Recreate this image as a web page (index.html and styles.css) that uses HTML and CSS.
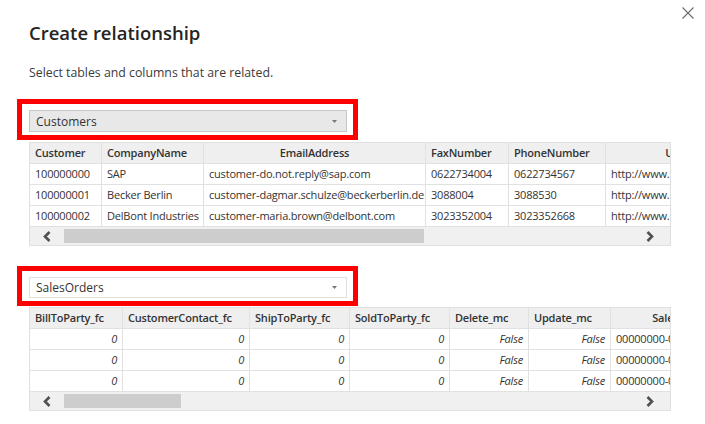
FILE: index.html
```html
<!DOCTYPE html>
<html lang="en">
<head>
<meta charset="utf-8">
<title>Create relationship</title>
<link rel="stylesheet" href="styles.css">
</head>
<body>
<div class="dialog">
  <button class="close" aria-label="Close">
    <svg width="12" height="12" viewBox="0 0 12 12"><path d="M0.5 0.5L11.5 11.5M11.5 0.5L0.5 11.5" stroke="#6b6b6b" stroke-width="1.1" fill="none"/></svg>
  </button>
  <h1 class="title">Create relationship</h1>
  <p class="subtitle">Select tables and columns that are related.</p>

  <section class="picker first">
    <div class="select active highlight">
      <span class="select-label">Customers</span>
      <svg class="caret" width="5" height="3" viewBox="0 0 5 3"><path d="M0 0H5L2.5 3Z" fill="#777"/></svg>
    </div>
    <div class="grid">
      <div class="grid-view cols-a">
        <div class="th">Customer</div>
        <div class="th">CompanyName</div>
        <div class="th center">EmailAddress</div>
        <div class="th">FaxNumber</div>
        <div class="th">PhoneNumber</div>
        <div class="th center">URL</div>

        <div class="td">100000000</div>
        <div class="td">SAP</div>
        <div class="td">customer-do.not.reply@sap.com</div>
        <div class="td">0622734004</div>
        <div class="td">0622734567</div>
        <div class="td">http://www.sap.com</div>

        <div class="td">100000001</div>
        <div class="td">Becker Berlin</div>
        <div class="td">customer-dagmar.schulze@beckerberlin.de</div>
        <div class="td">3088004</div>
        <div class="td">3088530</div>
        <div class="td">http://www.beckerberlin.de</div>

        <div class="td">100000002</div>
        <div class="td">DelBont Industries</div>
        <div class="td">customer-maria.brown@delbont.com</div>
        <div class="td">3023352004</div>
        <div class="td">3023352668</div>
        <div class="td">http://www.delbont.com</div>
      </div>
      <div class="hscroll">
        <span class="arrow-btn left">
          <svg width="10" height="11" viewBox="0 0 10 11"><path d="M7.5 1L3 5.5L7.5 10" stroke="#505050" stroke-width="2.6" fill="none"/></svg>
        </span>
        <div class="track"><div class="thumb" style="width:360px"></div></div>
        <span class="arrow-btn right">
          <svg width="10" height="11" viewBox="0 0 10 11"><path d="M2.5 1L7 5.5L2.5 10" stroke="#505050" stroke-width="2.6" fill="none"/></svg>
        </span>
      </div>
    </div>
  </section>

  <section class="picker second">
    <div class="select highlight">
      <span class="select-label">SalesOrders</span>
      <svg class="caret" width="5" height="3" viewBox="0 0 5 3"><path d="M0 0H5L2.5 3Z" fill="#777"/></svg>
    </div>
    <div class="grid">
      <div class="grid-view cols-b">
        <div class="th">BillToParty_fc</div>
        <div class="th">CustomerContact_fc</div>
        <div class="th">ShipToParty_fc</div>
        <div class="th">SoldToParty_fc</div>
        <div class="th">Delete_mc</div>
        <div class="th">Update_mc</div>
        <div class="th center">SalesOrder</div>

        <div class="td num">0</div>
        <div class="td num">0</div>
        <div class="td num">0</div>
        <div class="td num">0</div>
        <div class="td num">False</div>
        <div class="td num">False</div>
        <div class="td">00000000-0000-0000</div>

        <div class="td num">0</div>
        <div class="td num">0</div>
        <div class="td num">0</div>
        <div class="td num">0</div>
        <div class="td num">False</div>
        <div class="td num">False</div>
        <div class="td">00000000-0000-0000</div>

        <div class="td num">0</div>
        <div class="td num">0</div>
        <div class="td num">0</div>
        <div class="td num">0</div>
        <div class="td num">False</div>
        <div class="td num">False</div>
        <div class="td">00000000-0000-0000</div>
      </div>
      <div class="hscroll">
        <span class="arrow-btn left">
          <svg width="10" height="11" viewBox="0 0 10 11"><path d="M7.5 1L3 5.5L7.5 10" stroke="#505050" stroke-width="2.6" fill="none"/></svg>
        </span>
        <div class="track"><div class="thumb" style="width:117px"></div></div>
        <span class="arrow-btn right">
          <svg width="10" height="11" viewBox="0 0 10 11"><path d="M2.5 1L7 5.5L2.5 10" stroke="#505050" stroke-width="2.6" fill="none"/></svg>
        </span>
      </div>
    </div>
  </section>
</div>
</body>
</html>
```

FILE: styles.css
```css
* { box-sizing: border-box; }

html, body {
  margin: 0;
  padding: 0;
  background: #ffffff;
}

body {
  font-family: "Open Sans", "Noto Sans", "Liberation Sans", sans-serif;
  color: #333333;
}

.dialog {
  position: relative;
  width: 705px;
  height: 424px;
  padding: 21px 35px 0 29px;
  background: #ffffff;
}

.close {
  position: absolute;
  top: 7px;
  right: 11px;
  width: 12px;
  height: 12px;
  padding: 0;
  border: 0;
  background: transparent;
  display: flex;
  align-items: center;
  justify-content: center;
}

.title {
  margin: 0;
  font-size: 18.5px;
  line-height: 24px;
  font-weight: 600;
  color: #252423;
}

.subtitle {
  margin: 20px 0 0;
  font-size: 12.3px;
  line-height: 16px;
  color: #3b3b3b;
}

.picker.first { margin-top: 29px; }
.picker.second { margin-top: 31px; }

.select {
  position: relative;
  width: 318px;
  height: 22px;
  display: flex;
  align-items: center;
  justify-content: space-between;
  padding: 0 9px 0 6px;
  border: 1px solid #e0e0e0;
  background: #ffffff;
  font-size: 12px;
  color: #333333;
}

.select.active {
  background: #e8e8e8;
  border-color: #c6c6c6;
}

.picker.second .select { height: 21px; }

/* red annotation frame drawn over the page */
.select.highlight::after {
  content: "";
  position: absolute;
  left: -13px;
  right: -12px;
  top: -12px;
  bottom: -9px;
  border: 5px solid #ff0000;
  pointer-events: none;
}

.grid {
  width: 642px;
  margin-top: 10px;
  border: 1px solid #e0e0e0;
  overflow: hidden;
}

.picker.second .grid { margin-top: 9px; }

.grid-view {
  display: grid;
  font-size: 11px;
  line-height: 20px;
  letter-spacing: -0.2px;
}

.cols-a { grid-template-columns: 72px 102px 222px 83px 97px 140px; }
.cols-b { grid-template-columns: 93px 127px 100px 100px 79px 82px 140px; }

.th, .td {
  height: 21px;
  padding: 0 5px;
  border-right: 1px solid #e1e1e1;
  border-bottom: 1px solid #e1e1e1;
  white-space: nowrap;
  overflow: hidden;
}

.th {
  background: #efefef;
  font-weight: 600;
  color: #333333;
}

.td {
  background: #ffffff;
  color: #333333;
}

.center { text-align: center; }

.num {
  text-align: right;
  font-style: italic;
}

.hscroll {
  display: flex;
  align-items: stretch;
  height: 18px;
  background: #f0f0f0;
}

.arrow-btn {
  display: flex;
  align-items: center;
  justify-content: center;
  flex: none;
}

.arrow-btn.left { width: 34px; }
.arrow-btn.right { width: 40px; }

.track {
  flex: 1;
  display: flex;
  align-items: center;
}

.thumb {
  height: 14px;
  background: #cdcdcd;
}
```
